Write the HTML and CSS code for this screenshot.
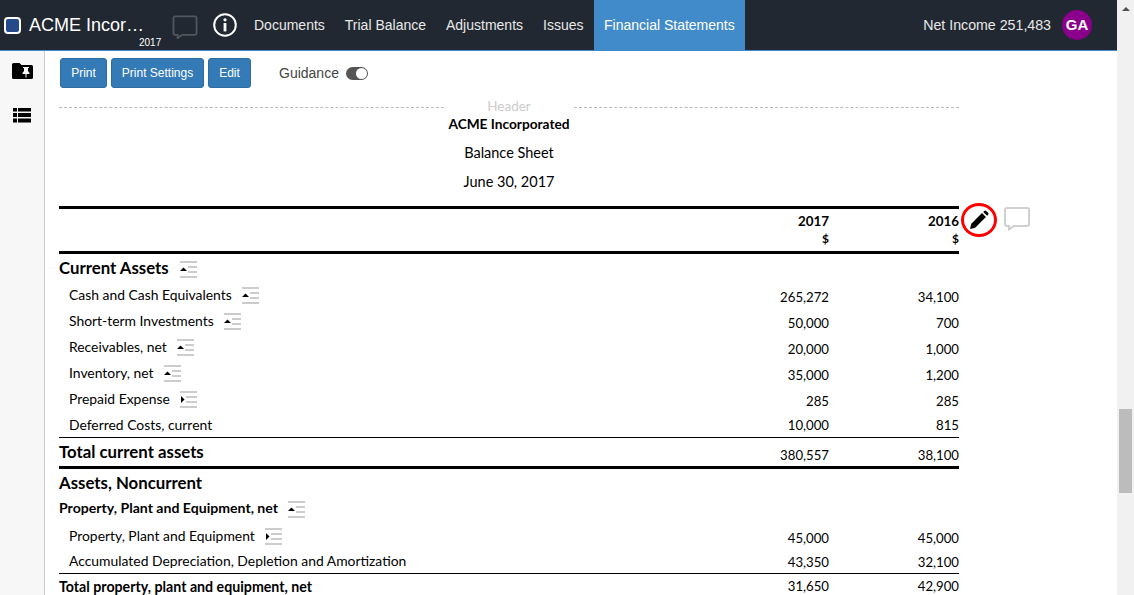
FILE: index.html
```html
<!DOCTYPE html>
<html>
  <head>
    <meta charset="utf-8"/>
    <title>Financial Statements</title>
    <link rel="stylesheet" href="styles.css">
  </head>
  <body>
    <div id="page">
      <div id="main">
        <div id="navbar">
          <span class="logo-box"></span>
          <div class="brand">
            <div class="brand-name">ACME Incor…</div>
            <div class="brand-year">2017</div>
          </div>
          <svg class="nav-comment" width="26" height="24" viewBox="0 0 28 26">
            <path d="M3.5 1.500h21a2 2 0 0 1 2 2v16a2 2 0 0 1-2 2H11l-5 3.500v-3.500H3.500a2 2 0 0 1-2-2v-16a2 2 0 0 1 2-2z" fill="none" stroke="#50565d" stroke-width="2"/>
          </svg>
          <svg class="nav-info" width="24" height="24" viewBox="0 0 24 24">
            <circle cx="12" cy="12" r="10.800" fill="none" stroke="#fff" stroke-width="2"/>
            <circle cx="12" cy="6.800" r="1.600" fill="#fff"/>
            <rect x="10.600" y="10" width="2.800" height="8.400" fill="#fff"/>
          </svg>
          <a class="nav-link">Documents</a>
          <a class="nav-link">Trial Balance</a>
          <a class="nav-link">Adjustments</a>
          <a class="nav-link">Issues</a>
          <a class="nav-link active">Financial Statements</a>
          <span class="net-income">Net Income 251,483</span>
          <span class="avatar">GA</span>
        </div>
        <div id="body-row">
          <div id="sidebar">
            <svg class="side-icon" width="21" height="16" viewBox="0 0 21 16">
              <path d="M1.500 0h6l2 2h10a1.500 1.500 0 0 1 1.500 1.500v11a1.500 1.500 0 0 1-1.500 1.500h-18a1.500 1.500 0 0 1-1.500-1.500v-13a1.500 1.500 0 0 1 1.500-1.500z" fill="#000"/>
              <path d="M11 4h6v1h-1v3l1.500 2v1h-3v3.500h-1v-3.500h-3v-1l1.500-2v-3h-1z" fill="#fff"/>
            </svg>
            <svg class="side-icon" width="18" height="15" viewBox="0 0 18 15">
              <path d="M0 0h4v3.500h-4zM5 0h13v3.500h-13zM0 5h4v4h-4zM5 5h13v4h-13zM0 10.500h4v4h-4zM5 10.500h13v4h-13z" fill="#000"/>
            </svg>
          </div>
          <div id="content">
            <div class="toolbar">
              <button class="btn btn-print">Print</button>
              <button class="btn btn-settings">Print Settings</button>
              <button class="btn btn-edit">Edit</button>
              <span class="guidance">Guidance</span>
              <span class="toggle"><span class="toggle-knob"></span></span>
            </div>
            <div class="sheet">
              <div class="header-rule">
                <span class="dash"></span>
                <span class="header-label">Header</span>
                <span class="dash"></span>
              </div>
              <div class="title-line first">ACME Incorporated</div>
              <div class="title-line">Balance Sheet</div>
              <div class="title-line">June 30, 2017</div>
              <div class="statement-wrap">
                <table class="statement">
                  <tr class="row-head">
                    <td></td>
                    <td class="num">2017<br/><span class="cur">$</span></td>
                    <td class="num">2016<br/><span class="cur">$</span></td>
                  </tr>
                  <tr class="row-section first-section">
                    <td>Current Assets <svg class="ind"><use href="#ind-up"/></svg></td><td></td><td></td>
                  </tr>
                  <tr class="row-item">
                    <td>Cash and Cash Equivalents <svg class="ind"><use href="#ind-up"/></svg></td>
                    <td class="num">265,272</td><td class="num">34,100</td>
                  </tr>
                  <tr class="row-item">
                    <td>Short-term Investments <svg class="ind"><use href="#ind-up"/></svg></td>
                    <td class="num">50,000</td><td class="num">700</td>
                  </tr>
                  <tr class="row-item">
                    <td>Receivables, net <svg class="ind"><use href="#ind-up"/></svg></td>
                    <td class="num">20,000</td><td class="num">1,000</td>
                  </tr>
                  <tr class="row-item">
                    <td>Inventory, net <svg class="ind"><use href="#ind-up"/></svg></td>
                    <td class="num">35,000</td><td class="num">1,200</td>
                  </tr>
                  <tr class="row-item">
                    <td>Prepaid Expense <svg class="ind"><use href="#ind-right"/></svg></td>
                    <td class="num">285</td><td class="num">285</td>
                  </tr>
                  <tr class="row-item plain">
                    <td>Deferred Costs, current</td>
                    <td class="num">10,000</td><td class="num">815</td>
                  </tr>
                  <tr class="row-total">
                    <td>Total current assets</td>
                    <td class="num">380,557</td><td class="num">38,100</td>
                  </tr>
                  <tr class="row-section">
                    <td>Assets, Noncurrent</td><td></td><td></td>
                  </tr>
                  <tr class="row-sub">
                    <td>Property, Plant and Equipment, net <svg class="ind"><use href="#ind-up"/></svg></td><td></td><td></td>
                  </tr>
                  <tr class="row-item">
                    <td>Property, Plant and Equipment <svg class="ind"><use href="#ind-right"/></svg></td>
                    <td class="num">45,000</td><td class="num">45,000</td>
                  </tr>
                  <tr class="row-item plain short">
                    <td>Accumulated Depreciation, Depletion and Amortization</td>
                    <td class="num">43,350</td><td class="num">32,100</td>
                  </tr>
                  <tr class="row-subtotal">
                    <td>Total property, plant and equipment, net</td>
                    <td class="num">31,650</td><td class="num">42,900</td>
                  </tr>
                </table>
                <div class="row-tools">
                  <span class="edit-ring">
                    <svg width="20" height="20" viewBox="0 0 20 20">
                      <path d="M1 19l1.300-5.200L13 3.100l3.900 3.900L6.200 17.700zM14.200 1.900l1-1a1.500 1.500 0 0 1 2 0l1.900 1.900a1.500 1.500 0 0 1 0 2l-1 1z" fill="#000"/>
                    </svg>
                  </span>
                  <svg class="row-comment" width="26" height="24" viewBox="0 0 26 24">
                    <path d="M3 1h20a2 2 0 0 1 2 2v14a2 2 0 0 1-2 2H10l-5 3.500v-3.500H3a2 2 0 0 1-2-2V3a2 2 0 0 1 2-2z" fill="none" stroke="#d0d0d0" stroke-width="2"/>
                  </svg>
                </div>
              </div>
            </div>
          </div>
        </div>
      </div>
      <div id="scrollbar">
        <span class="arrow"></span>
        <span class="thumb"></span>
      </div>
    </div>
    <svg class="defs" width="0" height="0">
      <symbol id="ind-up" viewBox="0 0 17 17">
        <path d="M0 0h17v2H0zM8 5h9v2H8zM8 10h9v2H8zM0 15h17v2H0z" fill="#ccc"/>
        <path d="M0 10l3.500-3.500L7 10z" fill="#000"/>
      </symbol>
      <symbol id="ind-right" viewBox="0 0 17 17">
        <path d="M0 0h17v2H0zM6 5h11v2H6zM6 10h11v2H6zM0 15h17v2H0z" fill="#ccc"/>
        <path d="M1 5l3.500 3.500L1 12z" fill="#000"/>
      </symbol>
    </svg>
  </body>
</html>
```

FILE: styles.css
```css
html, body {
  height: 100%;
  padding: 0;
  margin: 0;
  overflow: hidden;
}
body {
  background-color: #fff;
  font-family: "Liberation Sans", Arial, sans-serif;
}
table {
  border-collapse: collapse;
  border-spacing: 0;
  border: 0;
}
.defs {
  display: none;
}
#page {
  display: flex;
  width: 1134px;
  height: 595px;
  overflow: hidden;
}
#main {
  width: 1117px;
  display: flex;
  flex-direction: column;
}
#navbar {
  display: flex;
  align-items: center;
  height: 50px;
  flex: none;
  background-color: #222831;
  border-bottom: #428bca 1px solid;
  color: #fff;
  font-size: 14px;
}
.logo-box {
  width: 13px;
  height: 13px;
  margin-left: 4px;
  background-color: #244a8c;
  border: #fff 2px solid;
  border-radius: 4px;
}
.brand {
  position: relative;
  width: 116px;
  margin-left: 8px;
  height: 50px;
}
.brand-name {
  font-size: 18px;
  line-height: 50px;
  white-space: nowrap;
}
.brand-year {
  position: absolute;
  left: 110px;
  top: 37px;
  font-size: 10px;
  line-height: 12px;
}
.nav-comment {
  margin-left: 27px;
  margin-top: 4px;
}
.nav-info {
  margin-left: 15px;
}
.nav-link {
  display: block;
  padding: 0 10px;
  line-height: 50px;
  color: #e8e8e8;
}
.nav-info + .nav-link {
  margin-left: 7px;
}
.nav-link.active {
  padding: 0 10.500px;
  background-color: #428bca;
  color: #fff;
}
.net-income {
  margin-left: auto;
  font-size: 14.200px;
  color: #e8e8e8;
}
.avatar {
  width: 30px;
  height: 30px;
  margin-left: 11px;
  margin-right: 25px;
  border-radius: 50%;
  background-color: #8b008b;
  color: #fff;
  font-size: 15px;
  font-weight: bold;
  line-height: 30px;
  text-align: center;
}
#body-row {
  display: flex;
  flex: 1;
  min-height: 0;
}
#sidebar {
  width: 45px;
  flex: none;
  display: flex;
  flex-direction: column;
  align-items: center;
  padding-top: 12px;
  gap: 29px;
  box-sizing: border-box;
  background-color: #f7f7f7;
  border-right: #ccc 1px solid;
}
#content {
  flex: 1;
  padding: 7px 0 0 14px;
  min-width: 0;
}
.toolbar {
  display: flex;
  align-items: center;
  height: 30px;
  margin-left: 1px;
}
.btn {
  height: 30px;
  padding: 0;
  margin-right: 4px;
  background-color: #337ab7;
  border: #2e6da4 1px solid;
  border-radius: 3px;
  color: #fff;
  font-family: "Liberation Sans", Arial, sans-serif;
  font-size: 12px;
}
.btn-print {
  width: 47px;
}
.btn-settings {
  width: 93px;
}
.btn-edit {
  width: 43px;
}
.guidance {
  margin-left: 24px;
  font-size: 14px;
  color: #444;
}
.toggle {
  width: 22px;
  height: 13px;
  margin-left: 7px;
  box-sizing: border-box;
  display: flex;
  justify-content: flex-end;
  align-items: center;
  padding: 0 1px;
  background-color: #555;
  border-radius: 7px;
}
.toggle-knob {
  width: 11px;
  height: 11px;
  background-color: #fff;
  border-radius: 50%;
}
.sheet {
  width: 900px;
  font-family: Lato, sans-serif;
  color: #000;
}
.header-rule {
  display: flex;
  align-items: center;
  height: 16px;
  margin-top: 11px;
}
.dash {
  flex: 1;
  border-top: #bbb 1px dashed;
}
.header-label {
  width: 130px;
  padding-bottom: 2px;
  text-align: center;
  font-size: 13.500px;
  line-height: 14px;
  color: #ccc;
}
.title-line {
  height: 29px;
  line-height: 29px;
  text-align: center;
  font-size: 14.500px;
}
.title-line.first {
  font-weight: bold;
  font-size: 13.700px;
  margin-top: -6px;
}
.statement-wrap {
  position: relative;
  margin-top: 10px;
}
.statement {
  width: 900px;
  table-layout: fixed;
  font-size: 13.900px;
}
.statement td {
  padding: 0;
  white-space: nowrap;
}
.statement td:first-child {
  width: 640px;
}
.statement td:nth-child(2) {
  width: 130px;
}
.statement .num {
  text-align: right;
  font-size: 13.200px;
}
.ind {
  width: 17px;
  height: 17px;
  margin: -4px 0 -4px 7px;
  vertical-align: middle;
}
.row-head td {
  height: 42px;
  border-top: #000 3px solid;
  border-bottom: #000 3px solid;
  font-weight: bold;
  line-height: 17px;
  vertical-align: middle;
}
.statement .row-head .num {
  font-size: 13.400px;
}
.statement .row-head .cur {
  font-size: 12px;
}
.row-section td {
  font-size: 16.800px;
  font-weight: bold;
}
.statement .row-section td:first-child {
  height: 26px;
  padding-bottom: 4px;
}
.statement .row-section.first-section td:first-child {
  height: 27px;
  padding-bottom: 0;
}
.row-item td:first-child {
  height: 26px;
  padding-left: 10px;
}
.row-item.short td:first-child {
  height: 25px;
}
.statement .row-item .num {
  padding-top: 6px;
}
.statement .row-item.plain .num {
  padding-top: 2px;
}
.row-total td {
  border-top: #000 1px solid;
  border-bottom: #000 3px solid;
  font-size: 16.800px;
  font-weight: bold;
}
.statement .row-total td:first-child {
  height: 26px;
  padding-bottom: 2px;
}
.statement .row-total .num {
  padding-top: 6px;
  font-weight: normal;
}
.row-sub td {
  font-size: 14.100px;
  font-weight: bold;
}
.statement .row-sub td:first-child {
  height: 16px;
  padding-bottom: 6px;
}
.row-subtotal td {
  border-top: #000 1px solid;
  font-size: 14.200px;
  font-weight: bold;
}
.statement .row-subtotal td {
  height: 24px;
  padding-bottom: 2px;
}
.statement .row-subtotal .num {
  font-weight: normal;
}
.row-tools {
  position: absolute;
  left: 902px;
  top: -3px;
  display: flex;
  align-items: flex-start;
  gap: 7px;
}
.edit-ring {
  width: 30px;
  height: 28px;
  display: flex;
  align-items: center;
  justify-content: center;
  border: #f00 3px solid;
  border-radius: 50%;
  background-color: #fff;
}
.row-comment {
  margin-top: 4px;
}
#scrollbar {
  position: relative;
  width: 17px;
  background-color: #f1f1f1;
}
.arrow {
  position: absolute;
  left: 5px;
  top: 7px;
  border-left: 4px solid transparent;
  border-right: 4px solid transparent;
  border-bottom: 4px solid #505050;
}
.thumb {
  position: absolute;
  left: 2px;
  top: 409px;
  width: 13px;
  height: 84px;
  background-color: #bcbcbc;
}
```
